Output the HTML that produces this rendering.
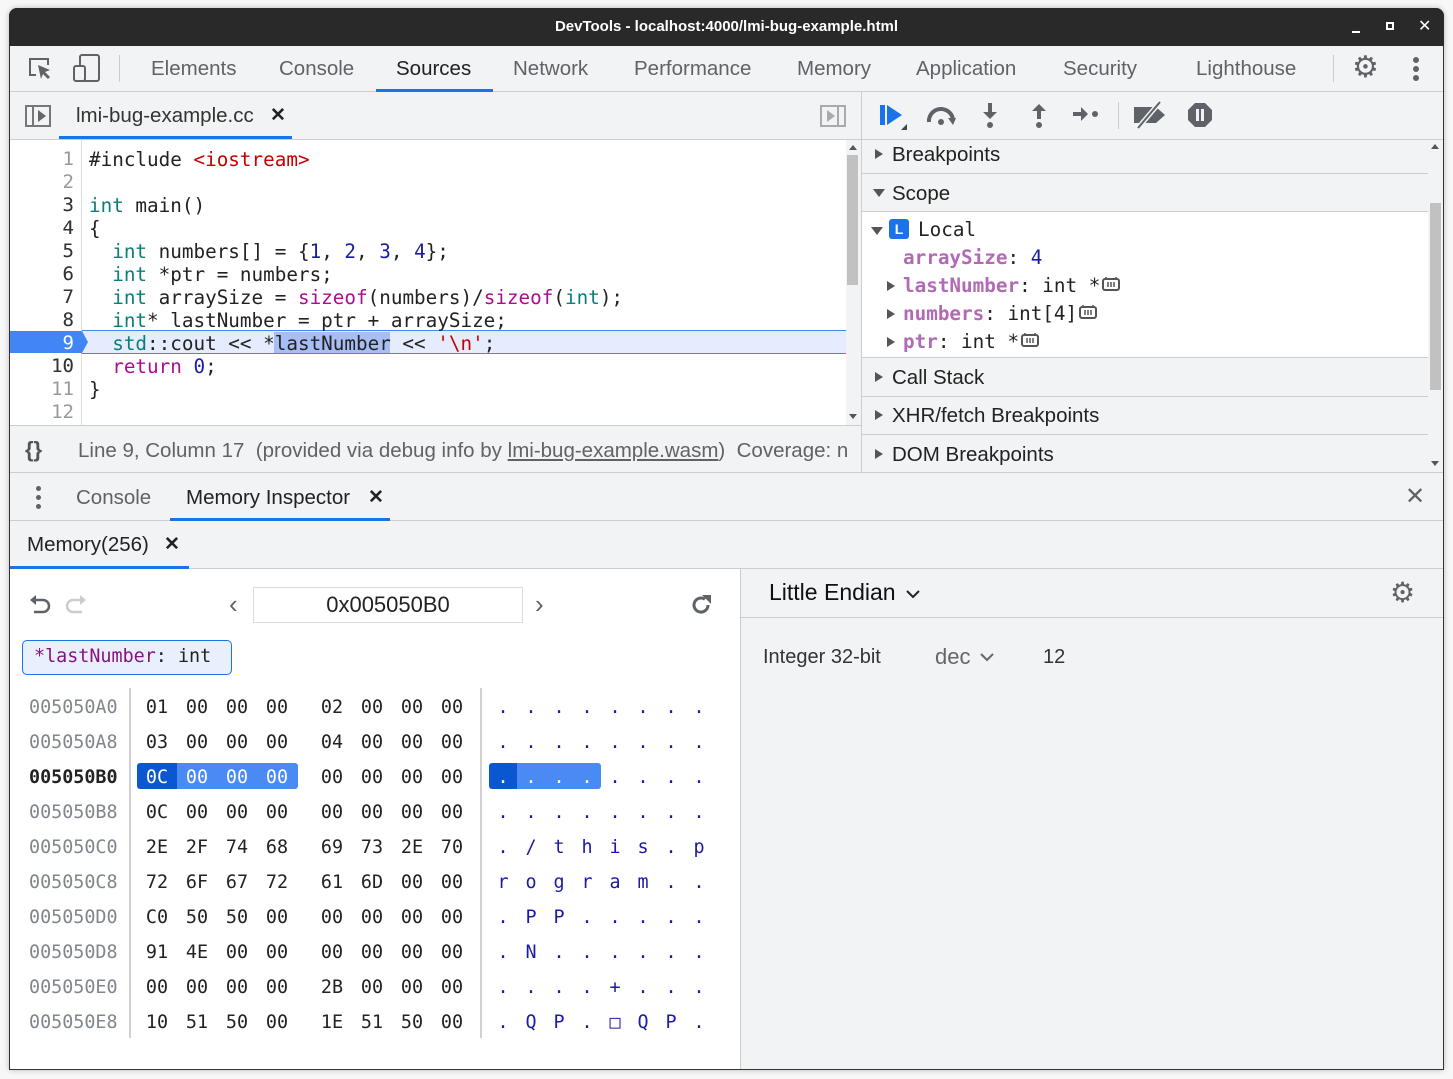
<!DOCTYPE html>
<html><head><meta charset="utf-8"><style>
*{margin:0;padding:0;box-sizing:border-box}
body{width:1453px;height:1079px;background:#f7f7f7;position:relative;overflow:hidden;font-family:"Liberation Sans",sans-serif;color:#333}
.a{position:absolute;white-space:pre}
.m{font-family:"DejaVu Sans Mono","Liberation Mono",monospace}
.bg{position:absolute}
.t{font-size:20.5px;color:#5f6368}
.code{font-size:19.3px;color:#222;line-height:23px}
.kw{color:#0b7f77}.str{color:#c80000}.num{color:#1a1aa6}.pk{color:#aa0d91}
.ln{font-size:19px;color:#333;text-align:right;width:40px;line-height:23px}
.ad{font-size:18.4px;color:#80868b}
.sec{font-size:20.5px;color:#222}
.tri{position:absolute;width:0;height:0;border-top:5px solid transparent;border-bottom:5px solid transparent;border-left:8px solid #555}
.trd{position:absolute;width:0;height:0;border-left:6px solid transparent;border-right:6px solid transparent;border-top:8px solid #555}
.row{position:absolute;left:137px;height:35px;line-height:35px;font-size:18.4px;white-space:nowrap;color:#222}
.row b{font-weight:normal;display:inline-block;width:40px;text-align:center}
.row i{font-style:normal;display:inline-block;width:15px}
.row s{text-decoration:none;display:inline-block;width:28px;text-align:center;color:#1a1aa6}
.row u{text-decoration:none;display:inline-block;width:17px}
</style></head><body>
<div class="bg" style="left:9px;top:8px;width:1435px;height:1062px;background:#f1f3f4;border:1px solid #333;border-radius:8px 8px 0 0;box-shadow:0 0 6px rgba(0,0,0,.25)"></div>
<div class="bg" style="left:9px;top:8px;width:1435px;height:38px;background:#292929;border-radius:8px 8px 0 0"></div>
<div class="a" style="left:0;width:1453px;text-align:center;top:18px;color:#fff;font-size:15px;font-weight:bold">DevTools - localhost:4000/lmi-bug-example.html</div>
<div class="bg" style="left:1352px;top:31px;width:8px;height:2px;background:#fff"></div>
<div class="bg" style="left:1386px;top:22px;width:8px;height:8px;border:2px solid #fff"></div>
<div class="a" style="left:1418px;top:16px;color:#fff;font-size:16px">✕</div>

<div class="bg" style="left:10px;top:91px;width:1433px;height:1px;background:#cbcdd1"></div>
<svg class="bg" style="left:26px;top:55px" width="28" height="28" viewBox="0 0 28 28"><path d="M10 20H4V4h18v6" fill="none" stroke="#5f6368" stroke-width="2"/><path d="M12 10l12 5-5 2 5 5-2 2-5-5-2 5z" fill="#5f6368"/></svg>
<svg class="bg" style="left:72px;top:53px" width="30" height="30" viewBox="0 0 30 30"><rect x="8" y="2" width="19" height="26" rx="2" fill="none" stroke="#5f6368" stroke-width="2"/><rect x="2" y="13" width="11" height="15" rx="2" fill="#f1f3f4" stroke="#5f6368" stroke-width="2"/></svg>
<div class="bg" style="left:119px;top:55px;width:1px;height:27px;background:#ccc"></div>
<div class="a t" style="left:151px;top:57px">Elements</div>
<div class="a t" style="left:279px;top:57px">Console</div>
<div class="a t" style="left:396px;top:57px;color:#222">Sources</div>
<div class="bg" style="left:376px;top:89px;width:117px;height:3px;background:#1a73e8"></div>
<div class="a t" style="left:513px;top:57px">Network</div>
<div class="a t" style="left:634px;top:57px">Performance</div>
<div class="a t" style="left:797px;top:57px">Memory</div>
<div class="a t" style="left:916px;top:57px">Application</div>
<div class="a t" style="left:1063px;top:57px">Security</div>
<div class="a t" style="left:1196px;top:57px">Lighthouse</div>
<div class="bg" style="left:1333px;top:55px;width:1px;height:27px;background:#ccc"></div>
<div class="a" style="left:1352px;top:50px;font-size:30px;color:#5f6368">⚙</div>
<div class="bg" style="left:1413px;top:57px;width:6px;height:6px;border-radius:3px;background:#5f6368"></div>
<div class="bg" style="left:1413px;top:66px;width:6px;height:6px;border-radius:3px;background:#5f6368"></div>
<div class="bg" style="left:1413px;top:75px;width:6px;height:6px;border-radius:3px;background:#5f6368"></div>

<div class="bg" style="left:10px;top:139px;width:851px;height:1px;background:#cbcdd1"></div>
<div class="bg" style="left:861px;top:92px;width:1px;height:380px;background:#cbcdd1"></div>
<div class="bg" style="left:25px;top:105px;width:26px;height:22px;border:2px solid #777"></div>
<div class="bg" style="left:32px;top:105px;width:2px;height:22px;background:#777"></div>
<div class="bg" style="left:38px;top:110px;border-top:6px solid transparent;border-bottom:6px solid transparent;border-left:8px solid #666"></div>
<div class="a" style="left:76px;top:104px;font-size:20.5px;color:#333">lmi-bug-example.cc</div>
<div class="a" style="left:270px;top:104px;font-size:19px;color:#222;font-weight:bold">✕</div>
<div class="bg" style="left:59px;top:136px;width:233px;height:3px;background:#1a73e8"></div>
<div class="bg" style="left:820px;top:105px;width:26px;height:22px;border:2px solid #aaa"></div>
<div class="bg" style="left:837px;top:105px;width:2px;height:22px;background:#aaa"></div>
<div class="bg" style="left:827px;top:110px;border-top:6px solid transparent;border-bottom:6px solid transparent;border-left:8px solid #aaa"></div>

<div class="bg" style="left:862px;top:139px;width:581px;height:1px;background:#cbcdd1"></div>
<div class="bg" style="left:880px;top:105px;width:5px;height:20px;background:#1a73e8"></div>
<div class="bg" style="left:887px;top:105px;border-top:10px solid transparent;border-bottom:10px solid transparent;border-left:15px solid #1a73e8"></div>
<div class="bg" style="left:901px;top:124px;border-left:6px solid transparent;border-bottom:6px solid #444"></div>
<svg class="bg" style="left:924px;top:100px" width="35" height="30" viewBox="0 0 35 30"><path d="M5 22a12 12 0 0 1 24-2" fill="none" stroke="#5f6368" stroke-width="4"/><path d="M24 18l8 0-3 7z" fill="#5f6368"/><circle cx="17" cy="22" r="3" fill="#5f6368"/></svg>
<svg class="bg" style="left:978px;top:101px" width="24" height="30" viewBox="0 0 24 30"><path d="M12 2v12" stroke="#5f6368" stroke-width="4"/><path d="M5 11h14l-7 7z" fill="#5f6368"/><circle cx="12" cy="24" r="3" fill="#5f6368"/></svg>
<svg class="bg" style="left:1027px;top:101px" width="24" height="30" viewBox="0 0 24 30"><path d="M12 8v10" stroke="#5f6368" stroke-width="4"/><path d="M5 10h14l-7-7z" fill="#5f6368"/><circle cx="12" cy="24" r="3" fill="#5f6368"/></svg>
<svg class="bg" style="left:1071px;top:102px" width="30" height="24" viewBox="0 0 30 24"><path d="M2 12h10" stroke="#5f6368" stroke-width="4"/><path d="M10 5v14l7-7z" fill="#5f6368"/><circle cx="24" cy="12" r="3" fill="#5f6368"/></svg>
<div class="bg" style="left:1118px;top:102px;width:1px;height:27px;background:#ccc"></div>
<svg class="bg" style="left:1132px;top:100px" width="36" height="30" viewBox="0 0 36 30"><path d="M2 7h22l9 8-9 8H2z" fill="#5f6368"/><path d="M6 28L28 2" stroke="#f1f3f4" stroke-width="5"/><path d="M6 28L28 2" stroke="#5f6368" stroke-width="2"/></svg>
<svg class="bg" style="left:1187px;top:102px" width="26" height="26" viewBox="0 0 26 26"><path d="M8 1h10l7 7v10l-7 7H8l-7-7V8z" fill="#5f6368"/><rect x="9" y="7" width="3" height="12" fill="#f1f3f4"/><rect x="14" y="7" width="3" height="12" fill="#f1f3f4"/></svg>

<div class="bg" style="left:10px;top:140px;width:836px;height:285px;background:#fff"></div>
<div class="bg" style="left:81px;top:140px;width:1px;height:285px;background:#ddd"></div>
<div class="bg" style="left:82px;top:330px;width:764px;height:24px;background:#e5ecfd;border-top:1px solid #4285f4;border-bottom:1px solid #4285f4"></div>
<div class="bg" style="left:10px;top:331px;width:72px;height:22px;background:#4285f4"></div>
<div class="bg" style="left:82px;top:331px;border-top:11px solid transparent;border-bottom:11px solid transparent;border-left:6px solid #4285f4"></div>
<div class="bg" style="left:274px;top:332px;width:116px;height:21px;background:#a7bdf4"></div>
<div class="a ln m" style="left:34px;top:148px;color:#999">1
2
3
4
5
6
7
8
<span style="color:#fff">9</span>
10
11
12</div>
<div class="a ln m" style="left:34px;top:148px;color:#333">&nbsp;
&nbsp;
3
4
5
6
7
8
&nbsp;
10</div>
<div class="a code m" style="left:89px;top:148px">#include <span class="str">&lt;iostream&gt;</span>

<span class="kw">int</span> main()
{
  <span class="kw">int</span> numbers[] = {<span class="num">1</span>, <span class="num">2</span>, <span class="num">3</span>, <span class="num">4</span>};
  <span class="kw">int</span> *ptr = numbers;
  <span class="kw">int</span> arraySize = <span class="pk">sizeof</span>(numbers)/<span class="pk">sizeof</span>(<span class="kw">int</span>);
  <span class="kw">int</span>* lastNumber = ptr + arraySize;
  <span class="kw">std</span>::cout &lt;&lt; *lastNumber &lt;&lt; <span class="str">'\n'</span>;
  <span class="pk">return</span> <span class="num">0</span>;
}
</div>
<div class="bg" style="left:847px;top:155px;width:11px;height:130px;background:#c1c1c1"></div>
<div class="bg" style="left:849px;top:414px;border-left:4px solid transparent;border-right:4px solid transparent;border-top:5px solid #555"></div>
<div class="bg" style="left:849px;top:145px;border-left:4px solid transparent;border-right:4px solid transparent;border-bottom:5px solid #555"></div>
<div class="bg" style="left:10px;top:425px;width:851px;height:1px;background:#cbcdd1"></div>
<div class="a" style="left:25px;top:437px;font-size:22px;color:#555;font-weight:bold">{}</div>
<div class="a" style="left:78px;top:439px;font-size:20.5px;color:#5f6368;width:772px;overflow:hidden">Line 9, Column 17  (provided via debug info by <u>lmi-bug-example.wasm</u>)  Coverage: n</div>

<div class="bg" style="left:862px;top:173px;width:566px;height:1px;background:#cbcdd1"></div>
<div class="bg" style="left:862px;top:211px;width:566px;height:1px;background:#cbcdd1"></div>
<div class="bg" style="left:862px;top:212px;width:566px;height:145px;background:#fff"></div>
<div class="bg" style="left:862px;top:357px;width:566px;height:1px;background:#cbcdd1"></div>
<div class="bg" style="left:862px;top:396px;width:566px;height:1px;background:#cbcdd1"></div>
<div class="bg" style="left:862px;top:434px;width:566px;height:1px;background:#cbcdd1"></div>
<div class="bg" style="left:1430px;top:203px;width:11px;height:187px;background:#c1c1c1"></div>
<div class="bg" style="left:1431px;top:144px;border-left:4px solid transparent;border-right:4px solid transparent;border-bottom:5px solid #555"></div>
<div class="bg" style="left:1431px;top:461px;border-left:4px solid transparent;border-right:4px solid transparent;border-top:5px solid #555"></div>
<div class="tri" style="left:875px;top:149px"></div>
<div class="a sec" style="left:892px;top:143px">Breakpoints</div>
<div class="trd" style="left:873px;top:189px"></div>
<div class="a sec" style="left:892px;top:182px">Scope</div>
<div class="trd" style="left:871px;top:227px"></div>
<div class="bg" style="left:889px;top:219px;width:20px;height:20px;background:#1a73e8;border-radius:3px;color:#fff;font-size:14px;font-weight:bold;text-align:center;line-height:20px">L</div>
<div class="a m" style="left:918px;top:218px;font-size:19.3px;color:#222">Local</div>
<div class="a m" style="left:903px;top:244px;font-size:19.3px;color:#222;line-height:28px"><span style="color:#b369b6;font-weight:bold">arraySize</span>: <span class="num">4</span>
<span style="color:#b369b6;font-weight:bold">lastNumber</span>: int *
<span style="color:#b369b6;font-weight:bold">numbers</span>: int[4]
<span style="color:#b369b6;font-weight:bold">ptr</span>: int *</div>
<div class="tri" style="left:887px;top:281px"></div>
<div class="tri" style="left:887px;top:309px"></div>
<div class="tri" style="left:887px;top:337px"></div>
<svg class="bg" style="left:1101px;top:276px" width="20" height="16"><rect x="2" y="3" width="16" height="11" rx="2" fill="none" stroke="#555" stroke-width="2"/><path d="M7 6v5M10 6v5M13 6v5M5 1v2M15 1v2" stroke="#555" stroke-width="1.5"/></svg>
<svg class="bg" style="left:1078px;top:304px" width="20" height="16"><rect x="2" y="3" width="16" height="11" rx="2" fill="none" stroke="#555" stroke-width="2"/><path d="M7 6v5M10 6v5M13 6v5M5 1v2M15 1v2" stroke="#555" stroke-width="1.5"/></svg>
<svg class="bg" style="left:1020px;top:332px" width="20" height="16"><rect x="2" y="3" width="16" height="11" rx="2" fill="none" stroke="#555" stroke-width="2"/><path d="M7 6v5M10 6v5M13 6v5M5 1v2M15 1v2" stroke="#555" stroke-width="1.5"/></svg>
<div class="tri" style="left:875px;top:372px"></div>
<div class="a sec" style="left:892px;top:366px">Call Stack</div>
<div class="tri" style="left:875px;top:410px"></div>
<div class="a sec" style="left:892px;top:404px">XHR/fetch Breakpoints</div>
<div class="tri" style="left:875px;top:449px"></div>
<div class="a sec" style="left:892px;top:443px">DOM Breakpoints</div>

<div class="bg" style="left:10px;top:472px;width:1433px;height:1px;background:#cbcdd1"></div>
<div class="bg" style="left:10px;top:520px;width:1433px;height:1px;background:#cbcdd1"></div>
<div class="bg" style="left:36px;top:486px;width:5px;height:5px;border-radius:3px;background:#5f6368"></div>
<div class="bg" style="left:36px;top:495px;width:5px;height:5px;border-radius:3px;background:#5f6368"></div>
<div class="bg" style="left:36px;top:504px;width:5px;height:5px;border-radius:3px;background:#5f6368"></div>
<div class="a t" style="left:76px;top:486px">Console</div>
<div class="a" style="left:186px;top:486px;font-size:20.5px;color:#222">Memory Inspector</div>
<div class="a" style="left:368px;top:486px;font-size:19px;color:#222;font-weight:bold">✕</div>
<div class="bg" style="left:170px;top:518px;width:220px;height:3px;background:#1a73e8"></div>
<div class="a" style="left:1405px;top:482px;font-size:24px;color:#5f6368">✕</div>
<div class="bg" style="left:10px;top:568px;width:1433px;height:1px;background:#cbcdd1"></div>
<div class="a" style="left:27px;top:533px;font-size:20.5px;color:#222">Memory(256)</div>
<div class="a" style="left:164px;top:533px;font-size:19px;color:#222;font-weight:bold">✕</div>
<div class="bg" style="left:10px;top:566px;width:179px;height:3px;background:#1a73e8"></div>

<div class="bg" style="left:10px;top:569px;width:730px;height:500px;background:#fff"></div>
<div class="bg" style="left:740px;top:569px;width:1px;height:500px;background:#cbcdd1"></div>
<svg class="bg" style="left:28px;top:594px" width="24" height="22" viewBox="0 0 24 22"><path d="M6 6h9a6 6 0 0 1 0 12H6" fill="none" stroke="#5f6368" stroke-width="2.5"/><path d="M2 6l6-5v10z" fill="#5f6368"/></svg>
<svg class="bg" style="left:64px;top:594px" width="24" height="22" viewBox="0 0 24 22"><path d="M18 6H9a6 6 0 0 0 0 12h9" fill="none" stroke="#ccc" stroke-width="2.5"/><path d="M22 6l-6-5v10z" fill="#ccc"/></svg>
<div class="a" style="left:229px;top:589px;font-size:26px;color:#5f6368">‹</div>
<div class="bg" style="left:253px;top:587px;width:270px;height:36px;border:1px solid #dadce0"></div>
<div class="a" style="left:253px;width:270px;text-align:center;top:592px;font-size:22px;color:#222">0x005050B0</div>
<div class="a" style="left:535px;top:589px;font-size:26px;color:#5f6368">›</div>
<svg class="bg" style="left:689px;top:593px" width="24" height="24" viewBox="0 0 24 24"><path d="M19 12a7 7 0 1 1-3-5.7" fill="none" stroke="#5f6368" stroke-width="3"/><path d="M13 2h9v9z" fill="#5f6368"/></svg>
<div class="bg" style="left:22px;top:640px;width:210px;height:35px;background:#e8f0fe;border:1px solid #1a73e8;border-radius:5px"></div>
<div class="a m" style="left:34px;top:646px;font-size:18.4px;color:#222"><span style="color:#881280">*lastNumber</span>: int</div>
<div class="bg" style="left:129px;top:688px;width:2px;height:350px;background:#cfd1d4"></div>
<div class="bg" style="left:480px;top:688px;width:2px;height:350px;background:#cfd1d4"></div>
<div class="bg" style="left:137px;top:763px;width:40px;height:26px;background:#0b57d0;border-radius:3px 0 0 3px"></div>
<div class="bg" style="left:177px;top:763px;width:121px;height:26px;background:#4a8af4;border-radius:0 3px 3px 0"></div>
<div class="bg" style="left:489px;top:763px;width:28px;height:26px;background:#0b57d0;border-radius:3px 0 0 3px"></div>
<div class="bg" style="left:517px;top:763px;width:84px;height:26px;background:#4a8af4;border-radius:0 3px 3px 0"></div>
<div class="a ad m" style="left:29px;top:690px;line-height:35px">005050A0
005050A8
<b style="color:#222">005050B0</b>
005050B8
005050C0
005050C8
005050D0
005050D8
005050E0
005050E8</div>
<div class="row m" style="top:690px"><b>01</b><b>00</b><b>00</b><b>00</b><i></i><b>02</b><b>00</b><b>00</b><b>00</b><u></u><s>.</s><s>.</s><s>.</s><s>.</s><s>.</s><s>.</s><s>.</s><s>.</s></div>
<div class="row m" style="top:725px"><b>03</b><b>00</b><b>00</b><b>00</b><i></i><b>04</b><b>00</b><b>00</b><b>00</b><u></u><s>.</s><s>.</s><s>.</s><s>.</s><s>.</s><s>.</s><s>.</s><s>.</s></div>
<div class="row m" style="top:760px"><b style="color:#fff">0C</b><b style="color:#fff">00</b><b style="color:#fff">00</b><b style="color:#fff">00</b><i></i><b>00</b><b>00</b><b>00</b><b>00</b><u></u><s style="color:#fff">.</s><s style="color:#fff">.</s><s style="color:#fff">.</s><s style="color:#fff">.</s><s>.</s><s>.</s><s>.</s><s>.</s></div>
<div class="row m" style="top:795px"><b>0C</b><b>00</b><b>00</b><b>00</b><i></i><b>00</b><b>00</b><b>00</b><b>00</b><u></u><s>.</s><s>.</s><s>.</s><s>.</s><s>.</s><s>.</s><s>.</s><s>.</s></div>
<div class="row m" style="top:830px"><b>2E</b><b>2F</b><b>74</b><b>68</b><i></i><b>69</b><b>73</b><b>2E</b><b>70</b><u></u><s>.</s><s>/</s><s>t</s><s>h</s><s>i</s><s>s</s><s>.</s><s>p</s></div>
<div class="row m" style="top:865px"><b>72</b><b>6F</b><b>67</b><b>72</b><i></i><b>61</b><b>6D</b><b>00</b><b>00</b><u></u><s>r</s><s>o</s><s>g</s><s>r</s><s>a</s><s>m</s><s>.</s><s>.</s></div>
<div class="row m" style="top:900px"><b>C0</b><b>50</b><b>50</b><b>00</b><i></i><b>00</b><b>00</b><b>00</b><b>00</b><u></u><s>.</s><s>P</s><s>P</s><s>.</s><s>.</s><s>.</s><s>.</s><s>.</s></div>
<div class="row m" style="top:935px"><b>91</b><b>4E</b><b>00</b><b>00</b><i></i><b>00</b><b>00</b><b>00</b><b>00</b><u></u><s>.</s><s>N</s><s>.</s><s>.</s><s>.</s><s>.</s><s>.</s><s>.</s></div>
<div class="row m" style="top:970px"><b>00</b><b>00</b><b>00</b><b>00</b><i></i><b>2B</b><b>00</b><b>00</b><b>00</b><u></u><s>.</s><s>.</s><s>.</s><s>.</s><s>+</s><s>.</s><s>.</s><s>.</s></div>
<div class="row m" style="top:1005px"><b>10</b><b>51</b><b>50</b><b>00</b><i></i><b>1E</b><b>51</b><b>50</b><b>00</b><u></u><s>.</s><s>Q</s><s>P</s><s>.</s><s>□</s><s>Q</s><s>P</s><s>.</s></div>

<div class="bg" style="left:741px;top:617px;width:702px;height:1px;background:#cbcdd1"></div>
<div class="a" style="left:769px;top:579px;font-size:23px;color:#111">Little Endian</div>
<svg class="bg" style="left:905px;top:588px" width="16" height="12"><path d="M2 3l6 6 6-6" fill="none" stroke="#222" stroke-width="2"/></svg>
<div class="a" style="left:1390px;top:576px;font-size:28px;color:#5f6368">⚙</div>
<div class="a" style="left:763px;top:646px;font-size:20px;color:#333">Integer 32-bit</div>
<div class="a" style="left:935px;top:644px;font-size:22px;color:#666">dec</div>
<svg class="bg" style="left:979px;top:651px" width="16" height="12"><path d="M2 3l6 6 6-6" fill="none" stroke="#666" stroke-width="2"/></svg>
<div class="a" style="left:1043px;top:646px;font-size:20px;color:#333">12</div>
</body></html>
